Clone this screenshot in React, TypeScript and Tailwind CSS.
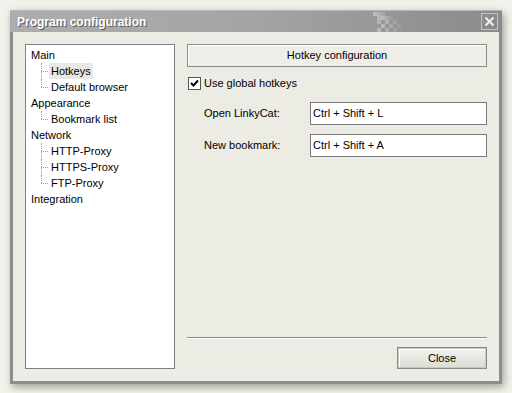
import React from "react";

interface TreeNode {
  label: string;
  children: string[];
}

const tree: TreeNode[] = [
  { label: "Main", children: ["Hotkeys", "Default browser"] },
  { label: "Appearance", children: ["Bookmark list"] },
  { label: "Network", children: ["HTTP-Proxy", "HTTPS-Proxy", "FTP-Proxy"] },
  { label: "Integration", children: [] },
];

const font = { fontFamily: '"Liberation Sans", Arial, sans-serif' };

const Checker: React.FC = () => {
  // little pixel pattern in the title bar
  const cells = [
    [0, 0, 0.35], [4, 0, 0.25], [8, 0, 0.15],
    [4, 4, 0.3], [8, 4, 0.35], [12, 4, 0.2], [16, 4, 0.1],
    [4, 8, 0.25], [12, 8, 0.3], [20, 8, 0.15],
    [8, 12, 0.35], [16, 12, 0.2], [24, 12, 0.1],
    [4, 16, 0.3], [12, 16, 0.25], [20, 16, 0.15],
  ];
  return (
    <svg width="30" height="20" className="shrink-0">
      {cells.map(([x, y, o], i) => (
        <rect key={i} x={x} y={y} width="4" height="4" fill="#ffffff" opacity={o} />
      ))}
    </svg>
  );
};

const TreeChild: React.FC<{ label: string; last: boolean; selected?: boolean }> = ({
  label,
  last,
  selected,
}) => (
  <div className="flex h-4 items-center pl-[5px]">
    <div className="relative h-4 w-[18px] shrink-0">
      <div
        className={`absolute left-[10px] top-0 w-0 border-l border-dotted border-[#a0a0a0] ${
          last ? "h-2" : "h-4"
        }`}
      />
      <div className="absolute left-[10px] top-[8px] h-0 w-[7px] border-t border-dotted border-[#a0a0a0]" />
    </div>
    <span className={`px-[2px] leading-4 ${selected ? "bg-[#e9e8e4]" : ""}`}>{label}</span>
  </div>
);

const App: React.FC = () => {
  return (
    <div className="h-[393px] w-[512px] bg-[#f2f1ea] pl-[10px] pt-[10px] text-[11px] text-black" style={font}>
      <div className="flex h-[374px] w-[492px] flex-col border-[3px] border-t-0 border-[#8d8d8d] bg-[#ecebe4] shadow-[2px_3px_8px_rgba(0,0,0,0.35)]">
        {/* title bar */}
        <div className="-mx-[3px] flex h-[22px] items-center border-t border-[#b8b8b8] bg-gradient-to-r from-[#adadad] via-[#a4a4a4] to-[#8a8a8a] pl-[7px] pr-[4px]">
          <span className="flex-1 text-[12px] font-bold text-white [text-shadow:1px_1px_0_#5c5c5c]">
            Program configuration
          </span>
          <Checker />
          <div className="w-[78px]" />
          <div className="flex h-[17px] w-[17px] items-center justify-center border border-[#c4c4c4]">
            <svg width="11" height="11" viewBox="0 0 11 11">
              <path d="M1.5 1.5 L9.5 9.5 M9.5 1.5 L1.5 9.5" stroke="#f2f2f2" strokeWidth="2" />
            </svg>
          </div>
        </div>

        <div className="flex flex-1 gap-3 p-3">
          {/* tree */}
          <div className="w-[150px] border border-[#828282] bg-white pt-[2px]">
            {tree.map((node) => (
              <div key={node.label}>
                <div className="flex h-4 items-center pl-[5px] leading-4">{node.label}</div>
                {node.children.map((c, i) => (
                  <TreeChild
                    key={c}
                    label={c}
                    last={i === node.children.length - 1}
                    selected={c === "Hotkeys"}
                  />
                ))}
              </div>
            ))}
          </div>

          {/* right side */}
          <div className="flex flex-1 flex-col">
            <div className="flex h-[23px] items-center justify-center border border-[#8a8a8a] bg-[#eeede7] shadow-[inset_1px_1px_0_#ffffff]">
              Hotkey configuration
            </div>

            <label className="mt-[9px] flex h-[14px] items-center gap-[3px] pl-[1px]">
              <span className="flex h-[13px] w-[13px] items-center justify-center border border-[#555555] bg-white">
                <svg width="9" height="9" viewBox="0 0 9 9">
                  <path d="M1 4 L3.5 6.5 L8 1.5" fill="none" stroke="#000" strokeWidth="2" />
                </svg>
              </span>
              <span>Use global hotkeys</span>
            </label>

            <div className="mt-3 flex flex-col gap-[9px]">
              <div className="flex items-center">
                <span className="w-[123px] pl-[17px]">Open LinkyCat:</span>
                <div className="flex h-[23px] flex-1 items-center border border-[#7a7a7a] bg-white pl-[2px]">
                  Ctrl + Shift + L
                </div>
              </div>
              <div className="flex items-center">
                <span className="w-[123px] pl-[17px]">New bookmark:</span>
                <div className="flex h-[23px] flex-1 items-center border border-[#7a7a7a] bg-white pl-[2px]">
                  Ctrl + Shift + A
                </div>
              </div>
            </div>

            <div className="flex-1" />
            <div className="border-t border-b border-t-[#8a8a8a] border-b-white" />
            <div className="mt-[8px] flex justify-end">
              <button className="flex h-[22px] w-[90px] items-center justify-center border border-[#8a8a8a] bg-gradient-to-b from-[#f3f3ef] to-[#dcdcd5] shadow-[inset_0_0_0_1px_#c9c9c4,inset_2px_2px_0_#ffffff]">
                Close
              </button>
            </div>
          </div>
        </div>
      </div>
    </div>
  );
};

export default App;
